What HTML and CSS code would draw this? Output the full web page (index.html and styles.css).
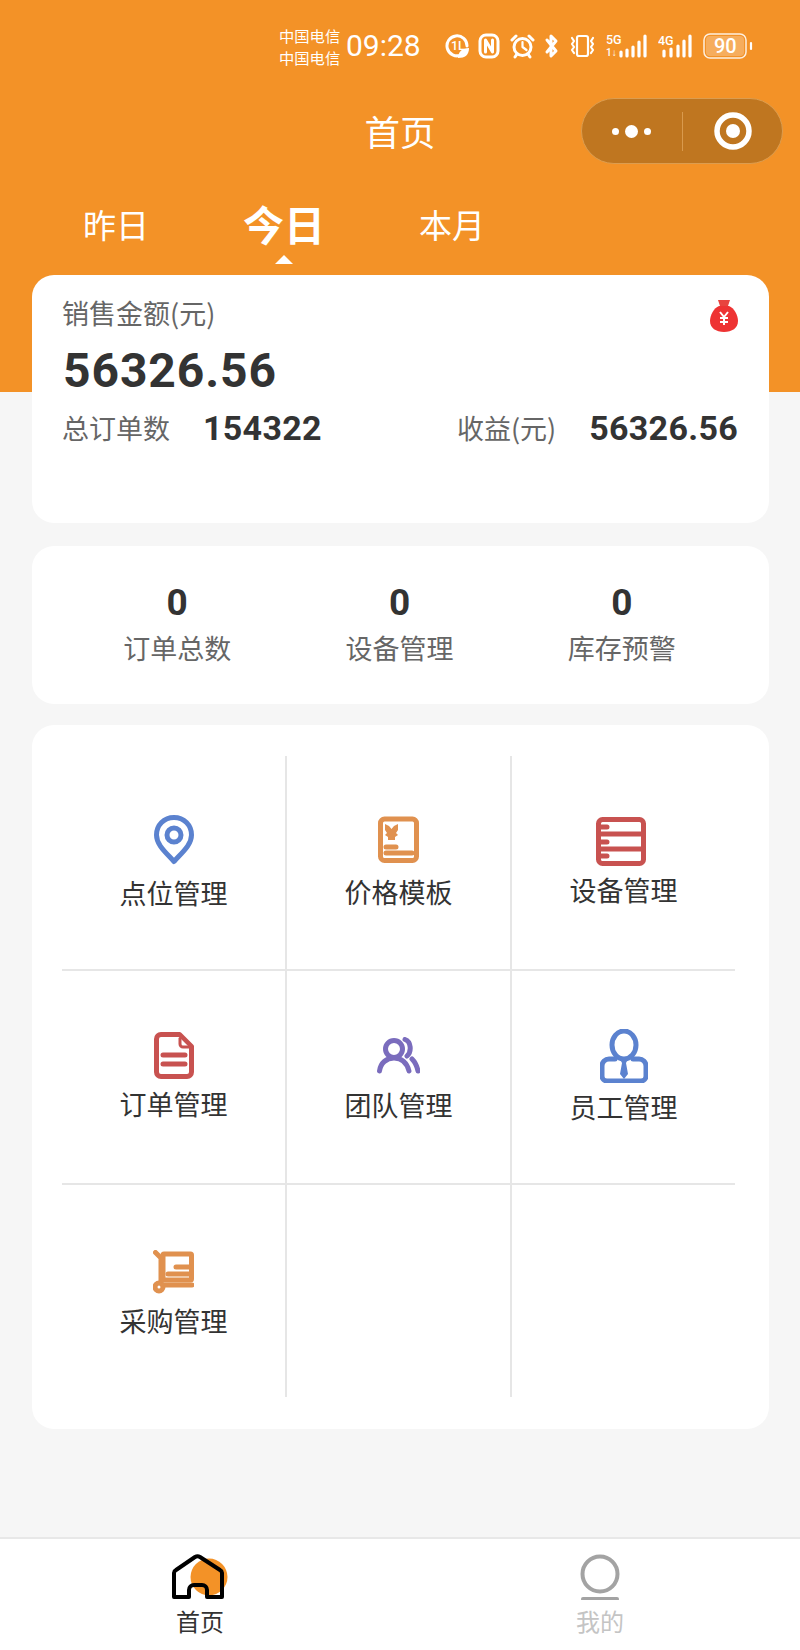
FILE: index.html
```html
<!DOCTYPE html>
<html lang="zh-CN">
<head>
<meta charset="utf-8">
<title>首页</title>
<link rel="stylesheet" href="styles.css">
</head>
<body>
<div class="page">
  <header class="hero">
    <div class="status">
      <div class="carrier"><span>中国电信</span><span>中国电信</span></div>
      <div class="time">09:28</div>
      <svg class="st st-1l" viewBox="0 0 24 26"><path class="s3" d="M16 22A10 10 0 1 1 22 13"/><text x="6" y="17" class="stx">1L</text><path class="wf" d="M13 25c0-6 4-10 11-10 0 7-4 10-11 10z"/></svg>
      <svg class="st st-nfc" viewBox="0 0 22 26"><rect class="s3" x="2" y="2" width="18" height="22" rx="6"/><path class="s3" d="M7.500 19V7l7 12V7"/></svg>
      <svg class="st st-alarm" viewBox="0 0 25 26"><circle class="s3" cx="12.500" cy="14" r="8.500"/><path class="s2" d="M12.500 9v5l4 3"/><path class="s3" d="M2 7l4-4M23 7l-4-4M5 24l2-3M20 24l-2-3"/></svg>
      <svg class="st st-bt" viewBox="0 0 15 26"><path class="s3" d="M3 7l9 11-5 5V3l5 5-9 11"/></svg>
      <svg class="st st-vib" viewBox="0 0 29 26"><rect class="s2" x="9" y="3" width="11" height="20" rx="2"/><path class="s2" d="M4 5l2 3-2 3 2 3-2 3 2 3M25 5l-2 3 2 3-2 3 2 3-2 3"/></svg>
      <svg class="st st-5g" viewBox="0 0 42 26"><text x="0" y="11" class="stx">5G</text><text x="0" y="23" class="stx stx-s">1↓</text><path class="bars" d="M15 19v4M21 17v6M27 14v9M33 9v14M39 3v20"/></svg>
      <svg class="st st-4g" viewBox="0 0 34 26"><text x="0" y="12" class="stx">4G</text><path class="bars" d="M6 18v5M13 16v7M20 13v10M26 8v15M32 3v20"/></svg>
      <svg class="st st-bat" viewBox="0 0 50 26"><rect class="bat-fill" x="3" y="3" width="38" height="20" rx="4"/><rect class="s15" x="1" y="1" width="42" height="24" rx="6"/><path class="s2" d="M48 10v6"/><text x="11" y="20" class="bat-t">90</text></svg>
    </div>
    <nav class="navbar">
      <span></span>
      <h1 class="title">首页</h1>
      <div class="capsule">
        <div class="dots"><i class="dot"></i><i class="dot dot-big"></i><i class="dot"></i></div>
        <div class="cap-sep"></div>
        <svg class="target" viewBox="0 0 38 38"><circle class="ring" cx="19" cy="19" r="16"/><circle class="core" cx="19" cy="19" r="7"/></svg>
      </div>
    </nav>
    <div class="tabs">
      <span class="tab">昨日</span>
      <span class="tab tab-on">今日</span>
      <span class="tab">本月</span>
    </div>
  </header>

  <main class="content">
    <section class="card sales">
      <div class="sales-top">
        <span class="sales-label">销售金额(元)</span>
        <svg class="bag" viewBox="0 0 28 32"><path class="bag-neck" d="M8 0h12l-2 6H10z"/><path class="bag-body" d="M9 6h10c5 2 9 9 9 15 0 7-6 11-14 11S0 28 0 21C0 15 4 8 9 6z"/><path class="bag-y" d="M10 12l4 5 4-5M10 18h8M10 22h8M14 17v8"/></svg>
      </div>
      <div class="sales-amount">56326.56</div>
      <div class="sales-row">
        <div class="pair"><span class="k">总订单数</span><b class="v">154322</b></div>
        <div class="pair"><span class="k">收益(元)</span><b class="v">56326.56</b></div>
      </div>
    </section>

    <section class="card stats">
      <div class="stat"><b>0</b><span>订单总数</span></div>
      <div class="stat"><b>0</b><span>设备管理</span></div>
      <div class="stat"><b>0</b><span>库存预警</span></div>
    </section>

    <section class="card menu">
      <div class="grid">
        <div class="cell cell-a">
          <svg class="ic ic-pin" viewBox="0 0 40 50"><path class="blue" d="M20 2.500C10 2.500 2.500 10 2.500 20c0 10 9.500 17.500 17.500 26.500C28 37.500 37.500 30 37.500 20 37.500 10 30 2.500 20 2.500z"/><circle class="blue" cx="20" cy="20" r="7"/></svg>
          <span>点位管理</span>
        </div>
        <div class="cell cell-g">
          <svg class="ic ic-book" viewBox="0 0 41 48"><rect class="org" x="2.500" y="4" width="36" height="41.500" rx="4"/><path class="org-f" d="M7 9l4 2 2.500 3L16 11l4-2v6l-2 3 2 2-3 2v3h-7v-3l-3-2 2-2-2-3z"/><path class="org-t" d="M8 32h10M8 38h26"/></svg>
          <span>价格模板</span>
        </div>
        <div class="cell cell-b">
          <svg class="ic ic-list" viewBox="0 0 50 49"><rect class="red" x="2.500" y="2.500" width="45" height="44" rx="4"/><path class="red" d="M2.500 17h45M2.500 32h45"/><path class="red-t" d="M4 10h7M4 25h7M4 39h7"/></svg>
          <span>设备管理</span>
        </div>
        <div class="cell cell-c">
          <svg class="ic ic-doc" viewBox="0 0 40 47"><path class="red" d="M7 2.500h18.500L37.500 14.500V40a4.500 4.500 0 0 1-4.500 4.500H7A4.500 4.500 0 0 1 2.500 40V7A4.500 4.500 0 0 1 7 2.500z"/><path class="red-f" d="M26 6v6a3 3 0 0 0 3 3h6"/><path class="red-t" d="M9 23h22M9 32h22"/></svg>
          <span>订单管理</span>
        </div>
        <div class="cell cell-d">
          <svg class="ic ic-team" viewBox="0 0 43 37"><circle class="pur" cx="17" cy="12" r="8.500"/><path class="pur" d="M2.500 34c1-8 7-13 14.500-13s13 5 15 13M28 2.500c6 2 7 12 2 16.500M35 22c3 3 5 7 6 12"/></svg>
          <span>团队管理</span>
        </div>
        <div class="cell cell-e">
          <svg class="ic ic-staff" viewBox="0 0 48 54"><ellipse class="blue" cx="24" cy="16" rx="12" ry="14"/><path class="blue" d="M15 30H9a7 7 0 0 0-7 7v10a5 5 0 0 0 5 5h34a5 5 0 0 0 5-5V37a7 7 0 0 0-7-7h-6"/><path class="blue-f" d="M20 30h8l-2 4 2 11-4 5-4-5 2-11z"/></svg>
          <span>员工管理</span>
        </div>
        <div class="cell cell-f">
          <svg class="ic ic-cart" viewBox="0 0 41 44"><path class="org" d="M2.500 2.500L8 8v24"/><rect class="org" x="10" y="4" width="28.500" height="26" rx="1"/><circle class="org-ring" cx="6" cy="37" r="4"/><path class="org" d="M10 35h29"/><path class="org-t" d="M23 17h13M15 24h21"/></svg>
          <span>采购管理</span>
        </div>
        <div class="cell"></div>
        <div class="cell"></div>
      </div>
    </section>
  </main>

  <footer class="tabbar">
    <div class="tb-item">
      <svg class="tb-ic" viewBox="0 0 56 46"><circle class="home-dot" cx="37" cy="23" r="18.500"/><path class="home" d="M2 43V19a4 4 0 0 1 2-3L23 3a5 5 0 0 1 5 0l20 13a4 4 0 0 1 2 3v24H35v-7a5 5 0 0 0-5-5h-8a5 5 0 0 0-5 5v7z"/></svg>
      <span class="tb-t">首页</span>
    </div>
    <div class="tb-item tb-off">
      <svg class="tb-ic" viewBox="0 0 56 46"><circle class="me" cx="28" cy="20" r="17.500"/><path class="me-l" d="M11 45h34"/></svg>
      <span class="tb-t">我的</span>
    </div>
  </footer>
</div>
</body>
</html>
```

FILE: styles.css
```css
* { box-sizing: border-box; }
html, body { margin: 0; padding: 0; }
body {
  background: #f6f6f6;
  color: #333;
  font-family: "Noto Sans CJK SC", "Noto Sans", sans-serif;
}
.page { width: 800px; height: 1650px; display: flex; flex-direction: column; overflow: hidden; }

.hero { height: 392px; flex: none; background: #f39227; color: #fff; padding-top: 27px; }
.status { height: 38px; display: flex; align-items: center; padding-left: 279px; }
.carrier { width: 62px; display: flex; flex-direction: column; font-size: 15.300px; line-height: 22px; white-space: nowrap; }
.time { width: 72px; margin-left: 5px; font: 400 30px/38px "Roboto", sans-serif; white-space: nowrap; }
.st { height: 26px; flex: none; }
.st-1l { width: 24px; margin-left: 27px; }
.st-nfc { width: 22px; margin-left: 9px; }
.st-alarm { width: 25px; margin-left: 10px; }
.st-bt { width: 15px; margin-left: 9px; }
.st-vib { width: 29px; margin-left: 9px; }
.st-5g { width: 42px; margin-left: 9px; }
.st-4g { width: 34px; margin-left: 10px; }
.st-bat { width: 50px; margin-left: 11px; }
.s2, .s15, .s3, .bars { fill: none; stroke: #fff; stroke-linecap: round; stroke-linejoin: round; }
.s2 { stroke-width: 2.200; }
.s15 { stroke-width: 1.500; opacity: .85; }
.s3 { stroke-width: 3; }
.bars { stroke-width: 3.200; }
.wf { fill: #fff; }
.stx { font: 500 12.500px "Roboto", sans-serif; fill: #fff; }
.stx-s { font-size: 10px; }
.bat-fill { fill: #fff; opacity: .25; }
.bat-t { font: 500 20px "Roboto", sans-serif; fill: #fff; }

.navbar { margin-top: 33px; padding: 0 17px; height: 66px; display: grid; grid-template-columns: 1fr auto 1fr; align-items: center; }
.title { margin: 0; font-size: 35.500px; font-weight: 400; line-height: 46px; }
.capsule { justify-self: end; width: 202px; height: 66px; border-radius: 33px; background: #bf7620; border: 1px solid #dc9d4f; display: flex; align-items: center; padding-left: 30px; }
.dots { display: flex; align-items: center; gap: 6px; width: 44px; }
.dot { width: 7px; height: 7px; border-radius: 50%; background: #fff; flex: none; }
.dot-big { width: 13px; height: 13px; }
.cap-sep { width: 1px; height: 39px; background: #d99a4d; margin-left: 26px; }
.target { width: 38px; height: 38px; margin-left: 31px; flex: none; }
.ring { fill: none; stroke: #fff; stroke-width: 5.500; }
.core { fill: #fff; }

.tabs { margin-top: 41px; padding-left: 83px; display: flex; align-items: center; height: 39px; gap: 94px; }
.tab { position: relative; font-size: 33px; line-height: 39px; white-space: nowrap; }
.tab-on { font-size: 41px; font-weight: 700; margin-top: -3px; }
.tab-on::after { content: ""; position: absolute; left: 50%; top: 51px; margin-left: -9px; border: 9px solid transparent; border-top: 0; border-bottom-color: #fff; }

.content { margin-top: -117px; padding: 0 31px 0 32px; position: relative; }
.card { background: #fff; border-radius: 22px; }

.sales { height: 248px; padding: 21px 31px 0 30px; }
.sales-top { display: flex; justify-content: space-between; align-items: flex-start; }
.sales-label { font-size: 27px; line-height: 34px; color: #666; }
.bag { width: 28px; height: 32px; margin-top: 4px; }
.bag-neck { fill: #e8443f; }
.bag-body { fill: #ee3333; }
.bag-y { fill: none; stroke: #fff; stroke-width: 2; }
.sales-amount { margin-top: 9px; padding-left: 1px; font: 700 48px/60px "Roboto", sans-serif; letter-spacing: .9px; color: #333; }
.sales-row { display: flex; justify-content: space-between; margin-top: 7px; }
.pair { display: flex; align-items: center; gap: 33px; }
.k { font-size: 27px; line-height: 40px; color: #666; }
.v { font: 700 34px/40px "Roboto", sans-serif; letter-spacing: .3px; color: #333; }

.stats { margin-top: 23px; height: 158px; display: grid; grid-template-columns: 1fr 1fr 1fr; padding: 35px 36px 0 34px; }
.stat { display: flex; flex-direction: column; align-items: center; }
.stat b { font: 700 37px/44px "Roboto", sans-serif; color: #333; }
.stat span { margin-top: 3px; font-size: 27px; line-height: 40px; color: #666; }

.menu { margin-top: 21px; height: 704px; padding: 31px 34px 0 30px; }
.grid { display: grid; grid-template-columns: 223px 225px 1fr; grid-template-rows: 213px 214px 214px; }
.cell { display: flex; flex-direction: column; align-items: center; border-left: 2px solid #e6e6e6; border-top: 2px solid #e6e6e6; font-size: 27px; line-height: 36px; color: #333; }
.cell:nth-child(3n+1) { border-left: 0; }
.cell:nth-child(-n+3) { border-top: 0; }
.ic { display: block; flex: none; }
.cell-a { padding-top: 59px; }
.cell-a .ic { margin-bottom: 10px; }
.cell-g { padding-top: 59px; }
.cell-g .ic { margin-bottom: 11px; }
.cell-b { padding-top: 61px; }
.cell-b .ic { margin-bottom: 6px; margin-right: 5px; }
.cell-c { padding-top: 61px; }
.cell-c .ic { margin-bottom: 7px; }
.cell-d { padding-top: 66px; }
.cell-d .ic { margin-bottom: 13px; }
.cell-e { padding-top: 58px; }
.cell-e .ic { margin-bottom: 6px; }
.cell-f { padding-top: 65px; }
.cell-f .ic { margin-bottom: 9px; }
.ic-pin { width: 40px; height: 50px; }
.ic-book { width: 41px; height: 48px; }
.ic-list { width: 50px; height: 49px; }
.ic-doc { width: 40px; height: 47px; }
.ic-team { width: 43px; height: 37px; }
.ic-staff { width: 48px; height: 54px; }
.ic-cart { width: 41px; height: 44px; }
.blue, .org, .red, .pur, .org-ring { fill: none; stroke-linecap: round; stroke-linejoin: round; }
.blue { stroke: #5b82cf; stroke-width: 5; }
.blue-f { fill: #5b82cf; }
.org { stroke: #e0914f; stroke-width: 5; }
.org-f { fill: #e0914f; }
.org-ring { stroke: #e0914f; stroke-width: 5; }
.org-t { fill: none; stroke: #e0914f; stroke-width: 5; stroke-linecap: round; }
.red { stroke: #c85250; stroke-width: 5; }
.red-f { fill: #fff; stroke: #c85250; stroke-width: 3; }
.red-t { fill: none; stroke: #c85250; stroke-width: 5; stroke-linecap: round; }
.pur { stroke: #7a6cbd; stroke-width: 5; }

.tabbar { margin-top: auto; height: 113px; flex: none; background: #fff; border-top: 2px solid #e8e8e8; display: grid; grid-template-columns: 1fr 1fr; padding-top: 15px; }
.tb-item { display: flex; flex-direction: column; align-items: center; }
.tb-ic { width: 56px; height: 46px; flex: none; }
.tb-t { margin-top: 7px; font-size: 24px; line-height: 28px; color: #333; }
.tb-off .tb-t { color: #c4c4c4; }
.home-dot { fill: #f39227; }
.home { fill: none; stroke: #000; stroke-width: 4; stroke-linejoin: round; }
.me { fill: none; stroke: #a3a3a3; stroke-width: 4; }
.me-l { fill: none; stroke: #a3a3a3; stroke-width: 4; stroke-linecap: round; }
```
